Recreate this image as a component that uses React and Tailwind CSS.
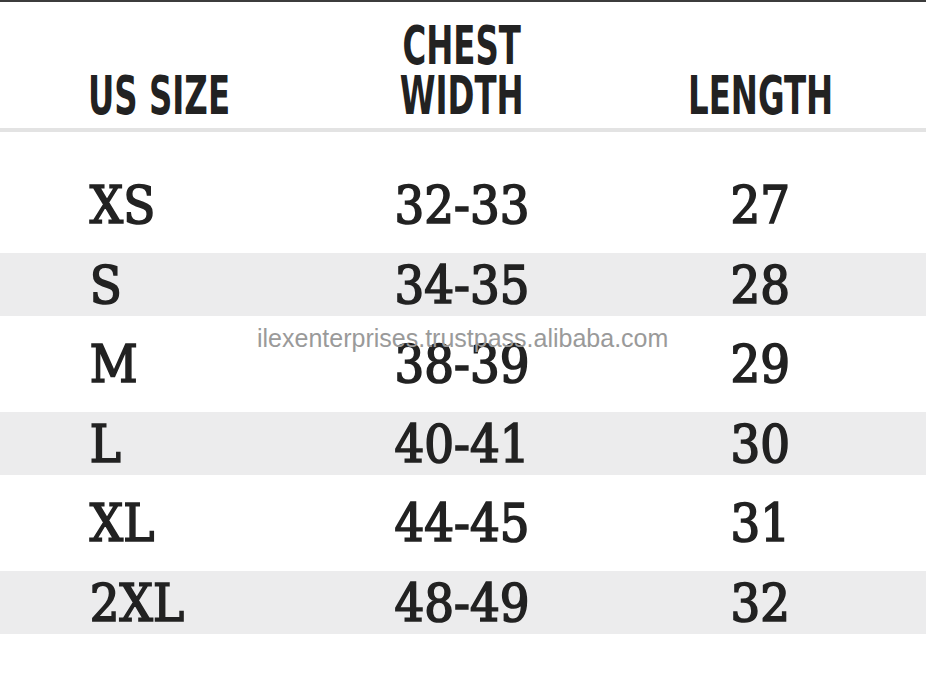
const rows = [
  { size: "XS", chest: "32-33", length: "27", shade: false },
  { size: "S", chest: "34-35", length: "28", shade: true },
  { size: "M", chest: "38-39", length: "29", shade: false },
  { size: "L", chest: "40-41", length: "30", shade: true },
  { size: "XL", chest: "44-45", length: "31", shade: false },
  { size: "2XL", chest: "48-49", length: "32", shade: true },
];

const headFont = "font-['DejaVu_Sans_Condensed',sans-serif]";
const bodyFont = "font-['DejaVu_Serif_Condensed','DejaVu_Serif',serif]";

export default function App() {
  return (
    <div className="relative w-[926px] h-[676px] bg-white overflow-hidden text-[#222]">
      <div className="h-[2px] bg-[#3c3c3c]" />

      {/* header */}
      <div className={`h-[126px] flex items-end pb-[7px] ${headFont} font-bold text-[53px] leading-[50px]`}>
        <div className="w-[88px]" />
        <div className="w-[242px] origin-left scale-x-[0.68]">US SIZE</div>
        <div className="w-[266px] text-center scale-x-[0.68]">
          <div>CHEST</div>
          <div>WIDTH</div>
        </div>
        <div className="w-[332px] text-center scale-x-[0.68]">LENGTH</div>
      </div>
      <div className="h-[4px] bg-[#e3e3e3]" />

      {/* rows */}
      <div className={`mt-[25px] ${bodyFont} font-normal text-[52px] [-webkit-text-stroke:1.7px_#222]`}>
        {rows.map((r) => (
          <div
            key={r.size}
            className={`flex items-center ${r.shade ? "h-[63px] bg-[#ececed]" : "h-[96px] bg-white"}`}
          >
            <div className="w-[90px]" />
            <div className="w-[240px] origin-left">{r.size}</div>
            <div className="w-[266px] text-center">{r.chest}</div>
            <div className="w-[332px] text-center">{r.length}</div>
          </div>
        ))}
      </div>

      {/* watermark */}
      <div className="absolute left-[257px] top-[320px] font-['Liberation_Sans',Arial,sans-serif] text-[25px] text-[#9a9a9a]">
        ilexenterprises.trustpass.alibaba.com
      </div>
    </div>
  );
}
